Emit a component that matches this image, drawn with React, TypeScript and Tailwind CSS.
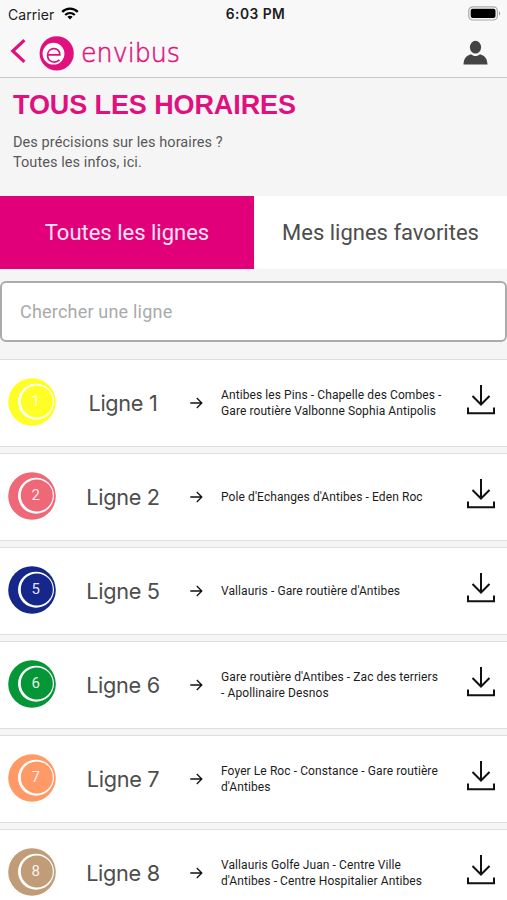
import { useState } from "react";

type Line = {
  id: string;
  color: string;
  stops: string[];
};

const lines: Line[] = [
  { id: "1", color: "#ffff26", stops: ["Antibes les Pins - Chapelle des Combes -", "Gare routière Valbonne Sophia Antipolis"] },
  { id: "2", color: "#ee6877", stops: ["Pole d'Echanges d'Antibes - Eden Roc"] },
  { id: "5", color: "#15278a", stops: ["Vallauris - Gare routière d'Antibes"] },
  { id: "6", color: "#059638", stops: ["Gare routière d'Antibes - Zac des terriers", "- Apollinaire Desnos"] },
  { id: "7", color: "#ff9966", stops: ["Foyer Le Roc - Constance - Gare routière", "d'Antibes"] },
  { id: "8", color: "#c09c78", stops: ["Vallauris Golfe Juan - Centre Ville", "d'Antibes - Centre Hospitalier Antibes"] },
];

function StatusBar() {
  return (
    <div className="flex h-7 items-center justify-between pl-2 pr-[6px] font-['Inter',sans-serif] text-[14px] text-[#1c1c1c]">
      <div className="flex flex-1 items-center gap-[7px]">
        <span className="tracking-[0.05px]">Carrier</span>
        <svg className="-mt-[2px]" width="18" height="13" viewBox="0 0 18 13" fill="none" stroke="#000" strokeWidth="2.3">
          <path d="M1.2 4.9C5.6.6 12.4.6 16.8 4.9" />
          <path d="M4.2 8C7 5.4 11 5.4 13.8 8" />
          <path d="M9 12.4 6.4 9.8c1.5-1.3 3.7-1.3 5.2 0z" fill="#000" stroke="none" />
        </svg>
      </div>
      <span className="translate-x-px text-[13.8px] font-semibold tracking-[0.45px]">6:03 PM</span>
      <div className="flex flex-1 justify-end">
        <svg className="-mt-[2px]" width="33" height="15" viewBox="0 0 33 15">
          <rect x="0.8" y="0.8" width="28.6" height="13.2" rx="4" fill="none" stroke="#a9a9a9" strokeWidth="1.2" />
          <rect x="2.7" y="2.7" width="24.8" height="9.4" rx="2" fill="#000" />
          <path d="M31 5.4v4c1.6-.6 1.6-3.4 0-4z" fill="#999" />
        </svg>
      </div>
    </div>
  );
}

function Header() {
  return (
    <header className="h-[78px] border-b border-[#c6c6c6] bg-[#f8f8f8]">
      <StatusBar />
      <div className="flex h-[49px] items-center justify-between pl-[10px] pr-[19px]">
        <div className="flex items-center">
          <button aria-label="Retour" className="-mt-[3px]">
            <svg width="17" height="26" viewBox="0 0 17 26" fill="none" stroke="#e0107f" strokeWidth="3.2">
              <path d="M14.4 2.2 2.8 13l11.6 10.8" />
            </svg>
          </button>
          <svg className="ml-3" width="144" height="36" viewBox="0 0 144 36">
            <circle cx="17.7" cy="18.4" r="17.1" fill="#e0107f" />
            <circle cx="14.5" cy="18.7" r="10.9" fill="#fff" />
            <path
              d="M8.6 19.9h12.2c.4-8.6-12.2-8.2-12.2.4 0 7.500 8.200 8.300 11.900 4.600"
              fill="none"
              stroke="#e0107f"
              strokeWidth="1.7"
            />
            <text
              x="42"
              y="26.6"
              textLength="99"
              lengthAdjust="spacingAndGlyphs"
              fontFamily="'DejaVu Sans', sans-serif"
              fontWeight="200"
              fontSize="26"
              fill="#e0107f"
              stroke="#e0107f"
              strokeWidth="0.5"
            >
              envibus
            </text>
          </svg>
        </div>
        <button aria-label="Mon compte">
          <svg width="25" height="26" viewBox="0 0 25 26" fill="#444">
            <ellipse cx="12.5" cy="7.2" rx="5.6" ry="6.4" />
            <path d="M.5 24.5c.3-5.5 2-8.6 7.5-10.3 2.6 2.4 6.400 2.400 9 0 5.500 1.700 7.200 4.800 7.500 10.300z" />
          </svg>
        </button>
      </div>
    </header>
  );
}

function LineBadge({ id, color }: { id: string; color: string }) {
  return (
    <svg width="48" height="48" viewBox="0 0 48 48" className="-mt-[2px] shrink-0">
      <circle cx="24" cy="24" r="23.8" fill={color} />
      <circle cx="28" cy="23.7" r="18" fill="#fff" />
      <circle cx="28.8" cy="23.4" r="16" fill={color} />
      <text x="27.6" y="27.5" textAnchor="middle" fontFamily="Roboto, sans-serif" fontSize="15" fill="#fff" fillOpacity="0.9">
        {id}
      </text>
    </svg>
  );
}

function LineRow({ line }: { line: Line }) {
  return (
    <li className="flex h-[88px] shrink-0 items-center border-y border-[#dfdfdf] bg-white pl-2 pr-[11px]">
      <LineBadge id={line.id} color={line.color} />
      <span className="ml-[23px] w-[88px] pt-px text-center font-['Inter',sans-serif] text-[21.7px] tracking-[-0.3px] text-[#4d4d4d]">
        Ligne {line.id}
      </span>
      <svg className="-mt-px ml-[23px] shrink-0" width="13" height="12" viewBox="0 0 13 12" fill="none" stroke="#111" strokeWidth="1.3">
        <path d="M.3 6h11.5M6.8 1l5 5-5 5" />
      </svg>
      <p className="ml-[18px] flex-1 whitespace-nowrap font-['Roboto',sans-serif] text-[12px] leading-4 tracking-[0.09px] text-[#1c1c1c]">
        {line.stops.map((stop) => (
          <span key={stop} className="block">
            {stop}
          </span>
        ))}
      </p>
      <button aria-label={"Télécharger la ligne " + line.id} className="-mt-[7px]">
        <svg width="30" height="30" viewBox="0 0 30 30" fill="none" stroke="#111" strokeWidth="2">
          <path d="M15 0v19.5M6.5 11l8.5 8.5 8.5-8.5" />
          <path d="M2 22.5v5.7h26v-5.7" />
        </svg>
      </button>
    </li>
  );
}

export default function App() {
  const [tab, setTab] = useState("all");
  const [query, setQuery] = useState("");

  const visible = lines.filter((l) => ("ligne " + l.id).includes(query.toLowerCase()));

  return (
    <div className="flex h-[900px] w-[507px] flex-col overflow-hidden bg-[#f5f5f5] font-['Roboto',sans-serif]">
      <Header />

      <div className="h-[118px] shrink-0 pl-[13px] pt-[11px]">
        <h1 className="font-['Liberation_Sans',sans-serif] text-[27px] font-bold leading-8 tracking-[-0.1px] text-[#e0107f]">
          TOUS LES HORAIRES
        </h1>
        <p className="mt-[12px] text-[14.5px] leading-[19.5px] tracking-[0.07px] text-[#585858]">
          Des précisions sur les horaires ?
          <br />
          Toutes les infos, ici.
        </p>
      </div>

      <div className="flex h-[73px] shrink-0 bg-white text-[22px]">
        <button
          onClick={() => setTab("all")}
          className={"w-[254px] " + (tab === "all" ? "bg-[#e2007a] text-[#ffe3f2]" : "text-[#4d4d4d]")}
        >
          Toutes les lignes
        </button>
        <button
          onClick={() => setTab("favorites")}
          className={"flex-1 " + (tab === "favorites" ? "bg-[#e2007a] text-[#ffe3f2]" : "text-[#4d4d4d]")}
        >
          Mes lignes favorites
        </button>
      </div>

      <input
        type="text"
        value={query}
        onChange={(e) => setQuery(e.target.value)}
        placeholder="Chercher une ligne"
        className="mt-3 h-[61px] w-full shrink-0 rounded-[6px] border-2 border-[#ababab] bg-white px-[18px] text-[18px] tracking-[0.2px] placeholder:text-[#aaa]"
      />

      <ul className="mt-[17px] flex flex-col gap-[6px]">
        {visible.map((line) => (
          <LineRow key={line.id} line={line} />
        ))}
      </ul>
    </div>
  );
}
